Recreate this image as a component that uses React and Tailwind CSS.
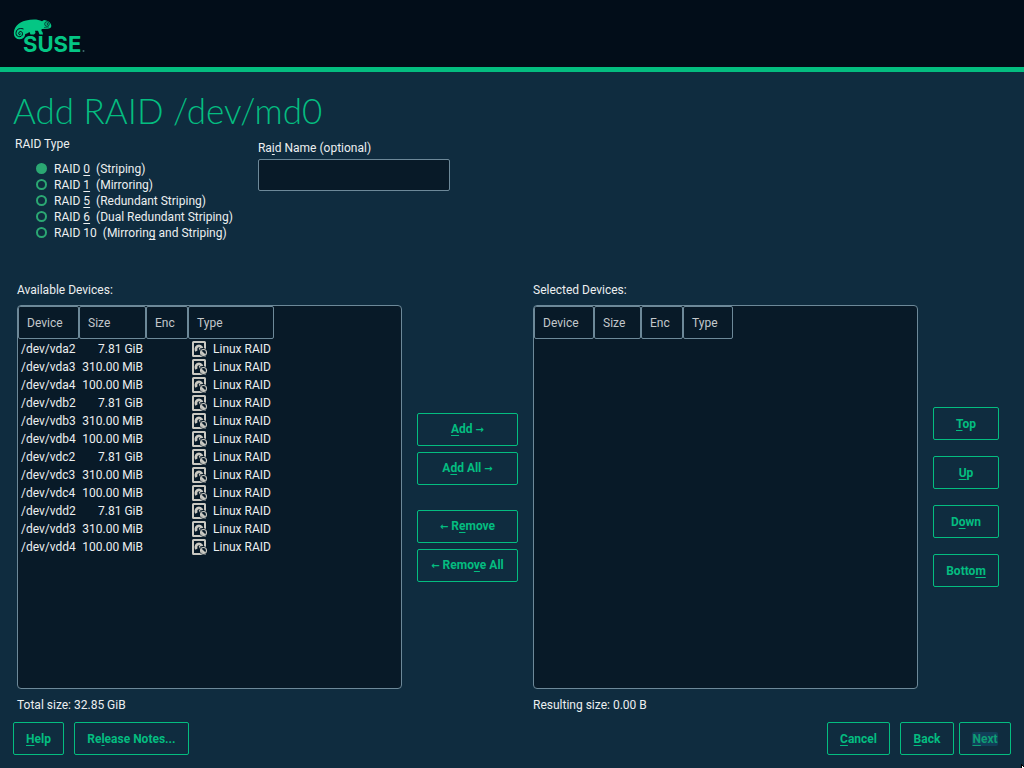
import React, { useState } from "react";

const raidTypes = [
  { value: "raid0", before: "RAID ", key: "0", after: "\u00a0 (Striping)" },
  { value: "raid1", before: "RAID ", key: "1", after: "\u00a0 (Mirroring)" },
  { value: "raid5", before: "RAID ", key: "5", after: "\u00a0 (Redundant Striping)" },
  { value: "raid6", before: "RAID ", key: "6", after: "\u00a0 (Dual Redundant Striping)" },
  { value: "raid10", before: "RAID 10\u00a0 (Mirrorin", key: "g", after: " and Striping)" },
];

const devices = ["vda", "vdb", "vdc", "vdd"].flatMap((disk) => [
  { name: `/dev/${disk}2`, size: "7.81 GiB" },
  { name: `/dev/${disk}3`, size: "310.00 MiB" },
  { name: `/dev/${disk}4`, size: "100.00 MiB" },
]);

function Mnemonic({ before = "", letter, after = "" }) {
  return (
    <>
      {before}
      <span className="underline decoration-1 underline-offset-2 [text-decoration-skip-ink:none]">{letter}</span>
      {after}
    </>
  );
}

function Arrow({ children }) {
  return <span className="font-['DejaVu_Sans',sans-serif] text-[10px] leading-none">{children}</span>;
}

function Button({ className = "", children }) {
  return (
    <button
      type="button"
      className={`h-[33px] rounded-xs border border-[#04bd80] px-3 text-xs font-bold whitespace-nowrap text-[#04bd80] ${className}`}
    >
      {children}
    </button>
  );
}

function SuseLogo() {
  return (
    <svg width="74" height="44" viewBox="0 0 74 44" role="img" aria-label="SUSE" className="block">
      <path
        fill="#04c684"
        d="M1 16C0 9 5 3 13 1.500C19 0 25 0 29 2.200L31 1C34 1.500 37 2.500 38 5.500C39 8 37.500 9.500 35 9.700L29 10C28 10.500 28.300 12 29.500 13L30 15.500L26.500 15.500L25 11.800L22 11.800L22.500 14L21 15.500L17.500 15.500L16.500 13L14 14.500C12.500 14.700 12 15 12 16.500A5.800 5.800 0 0 1 1 16Z"
      />
      <path
        fill="none"
        stroke="#020d19"
        strokeWidth="1"
        d="M10.500 10C6 8.500 3 10.500 3 14.500C3 18.500 9.500 19 9.500 14.700C9.500 11.800 5.700 11.800 5.700 14.500C5.700 16 7.400 16 7.500 14.700"
      />
      <circle cx="34" cy="5" r="2.300" fill="none" stroke="#020d19" strokeWidth=".7" />
      <circle cx="34.400" cy="5" r=".8" fill="#020d19" />
      <path d="M31 8.500L36 8" stroke="#020d19" strokeWidth=".5" />
      <text x="10" y="33" fill="#04c684" fontFamily="Inter, sans-serif" fontWeight="700" fontSize="22">
        SUSE
      </text>
      <circle cx="70.500" cy="32" r="1" fill="#3f6c70" />
    </svg>
  );
}

function DiskIcon() {
  return (
    <svg width="16" height="16" viewBox="0 0 16 16" aria-hidden="true" className="block">
      <rect x="1" y="1" width="12" height="14" rx=".5" fill="none" stroke="#cac9c2" strokeWidth="2" />
      <path d="M4.600 10A3.100 3.100 0 1 1 10 7.200" fill="none" stroke="#cac9c2" strokeWidth="2.800" />
      <path d="M7.300 7L8.500 9.500" fill="none" stroke="#cac9c2" strokeWidth="1.200" />
      <circle cx="11.500" cy="11.500" r="4.200" fill="#081a28" />
      <circle cx="11.500" cy="11.500" r="3" fill="none" stroke="#cac9c2" strokeWidth="1.100" />
      <path d="M9.400 9.400L13.600 13.600A3 3 0 0 1 9.400 9.400Z" fill="#cac9c2" />
    </svg>
  );
}

function DeviceTable({ label, widths, rows }) {
  return (
    <div className="h-full overflow-hidden rounded-sm border border-[#6d8999] bg-[#081a28]">
      <table aria-label={label} className="table-fixed border-separate border-spacing-0">
        <colgroup>
          {widths.map((w, i) => (
            <col key={i} className={w} />
          ))}
        </colgroup>
        <thead>
          <tr>
            {["Device", "Size", "Enc", "Type"].map((h) => (
              <th
                key={h}
                scope="col"
                className="h-[33px] rounded-xs border border-[#6d8999] px-2 text-left font-normal text-[#c3c8cb]"
              >
                {h}
              </th>
            ))}
          </tr>
        </thead>
        <tbody>
          {rows.map((d) => (
            <tr key={d.name}>
              <td className="pt-0.5 pl-[3px] whitespace-nowrap">{d.name}</td>
              <td className="pt-0.5 pr-[3px] text-right whitespace-nowrap">{d.size}</td>
              <td></td>
              <td className="pt-0.5 pl-1">
                <div className="flex items-center gap-[5px] whitespace-nowrap">
                  <DiskIcon />
                  Linux RAID
                </div>
              </td>
            </tr>
          ))}
        </tbody>
      </table>
    </div>
  );
}

export default function App() {
  const [raid, setRaid] = useState("raid0");

  return (
    <div className="relative flex min-h-screen flex-col bg-[#0f2c3f] font-[Roboto,sans-serif] text-xs text-[#eceff0]">
      <header className="border-b-5 border-[#04bd80] bg-[#020d19] pt-[19px] pb-1 pl-[13px]">
        <SuseLogo />
      </header>

      <main className="flex flex-1 flex-col pt-[18px]">
        <h1 className="pl-[13px] font-[Lato,sans-serif] text-[35px] leading-10 font-light text-[#04bd80]">
          Add RAID /dev/md0
        </h1>

        <div className="mt-1.5 flex items-start gap-[25px] pl-[15px]">
          <fieldset>
            <legend>RAID Type</legend>
            <div className="mt-[9px] pl-[21px]">
              {raidTypes.map((t) => (
                <label key={t.value} className="flex items-start gap-[7px]">
                  <input
                    type="radio"
                    name="raid-type"
                    value={t.value}
                    checked={raid === t.value}
                    onChange={() => setRaid(t.value)}
                    className="mt-0.5 size-[11px] appearance-none rounded-full border-2 border-[#2ba873] checked:bg-[#2ba873]"
                  />
                  <span className="whitespace-pre">
                    <Mnemonic before={t.before} letter={t.key} after={t.after} />
                  </span>
                </label>
              ))}
            </div>
          </fieldset>
          <div className="mt-1 flex flex-col gap-[3px]">
            <label htmlFor="raid-name">
              <Mnemonic before="Ra" letter="i" after="d Name (optional)" />
            </label>
            <input
              id="raid-name"
              type="text"
              className="h-8 w-48 rounded-xs border border-[#6d8999] bg-[#081a28] px-2 outline-none"
            />
          </div>
        </div>

        <section className="mt-[41px] grid flex-1 grid-cols-[1fr_101px_1fr_66px] grid-rows-[auto_1fr_auto] gap-x-[15px] gap-y-[7px] pr-[25px] pl-[17px]">
          <h2 className="col-span-2">Available Devices:</h2>
          <h2 className="col-span-2">Selected Devices:</h2>

          <DeviceTable label="Available devices" widths={["w-[61px]", "w-[67px]", "w-[42px]", "w-[86px]"]} rows={devices} />
          <div className="flex flex-col justify-center gap-[25px]">
            <div className="flex flex-col gap-1.5">
              <Button>
                <Mnemonic letter="A" after="dd " />
                <Arrow>→</Arrow>
              </Button>
              <Button>
                <Mnemonic before="A" letter="d" after="d All " />
                <Arrow>→</Arrow>
              </Button>
            </div>
            <div className="flex flex-col gap-1.5">
              <Button>
                <Arrow>←</Arrow>
                <Mnemonic before=" R" letter="e" after="move" />
              </Button>
              <Button>
                <Arrow>←</Arrow>
                <Mnemonic before=" Remo" letter="v" after="e All" />
              </Button>
            </div>
          </div>
          <DeviceTable label="Selected devices" widths={["w-[60px]", "w-[47px]", "w-[42px]", "w-[50px]"]} rows={[]} />
          <div className="flex flex-col justify-center gap-4">
            <Button>
              <Mnemonic letter="T" after="op" />
            </Button>
            <Button>
              <Mnemonic letter="U" after="p" />
            </Button>
            <Button>
              <Mnemonic before="D" letter="o" after="wn" />
            </Button>
            <Button>
              <Mnemonic before="Botto" letter="m" />
            </Button>
          </div>

          <p className="col-span-2 mt-px">Total size: 32.85 GiB</p>
          <p className="col-span-2 mt-px">Resulting size: 0.00 B</p>
        </section>
      </main>

      <footer className="flex justify-between px-[13px] pt-[9px] pb-[13px]">
        <div className="flex gap-2.5">
          <Button>
            <Mnemonic letter="H" after="elp" />
          </Button>
          <Button className="min-w-[115px]">
            <Mnemonic before="Re" letter="l" after="ease Notes..." />
          </Button>
        </div>
        <div className="flex gap-[5px]">
          <Button className="mr-[5px] min-w-[63px]">
            <Mnemonic letter="C" after="ancel" />
          </Button>
          <Button className="min-w-[54px]">
            <Mnemonic letter="B" after="ack" />
          </Button>
          <Button className="min-w-[52px]">
            <span className="rounded-xs bg-[#123e59] text-[#0e9c74]">
              <Mnemonic letter="N" after="ext" />
            </span>
          </Button>
        </div>
      </footer>

      <svg width="3" height="4" viewBox="0 0 3 4" aria-hidden="true" className="absolute right-0 bottom-0">
        <path d="M0 0H1V1H2V2H3V4H0Z" fill="#000" />
        <path d="M1 2H2V3H3V4H1Z" fill="#fff" />
      </svg>
    </div>
  );
}
